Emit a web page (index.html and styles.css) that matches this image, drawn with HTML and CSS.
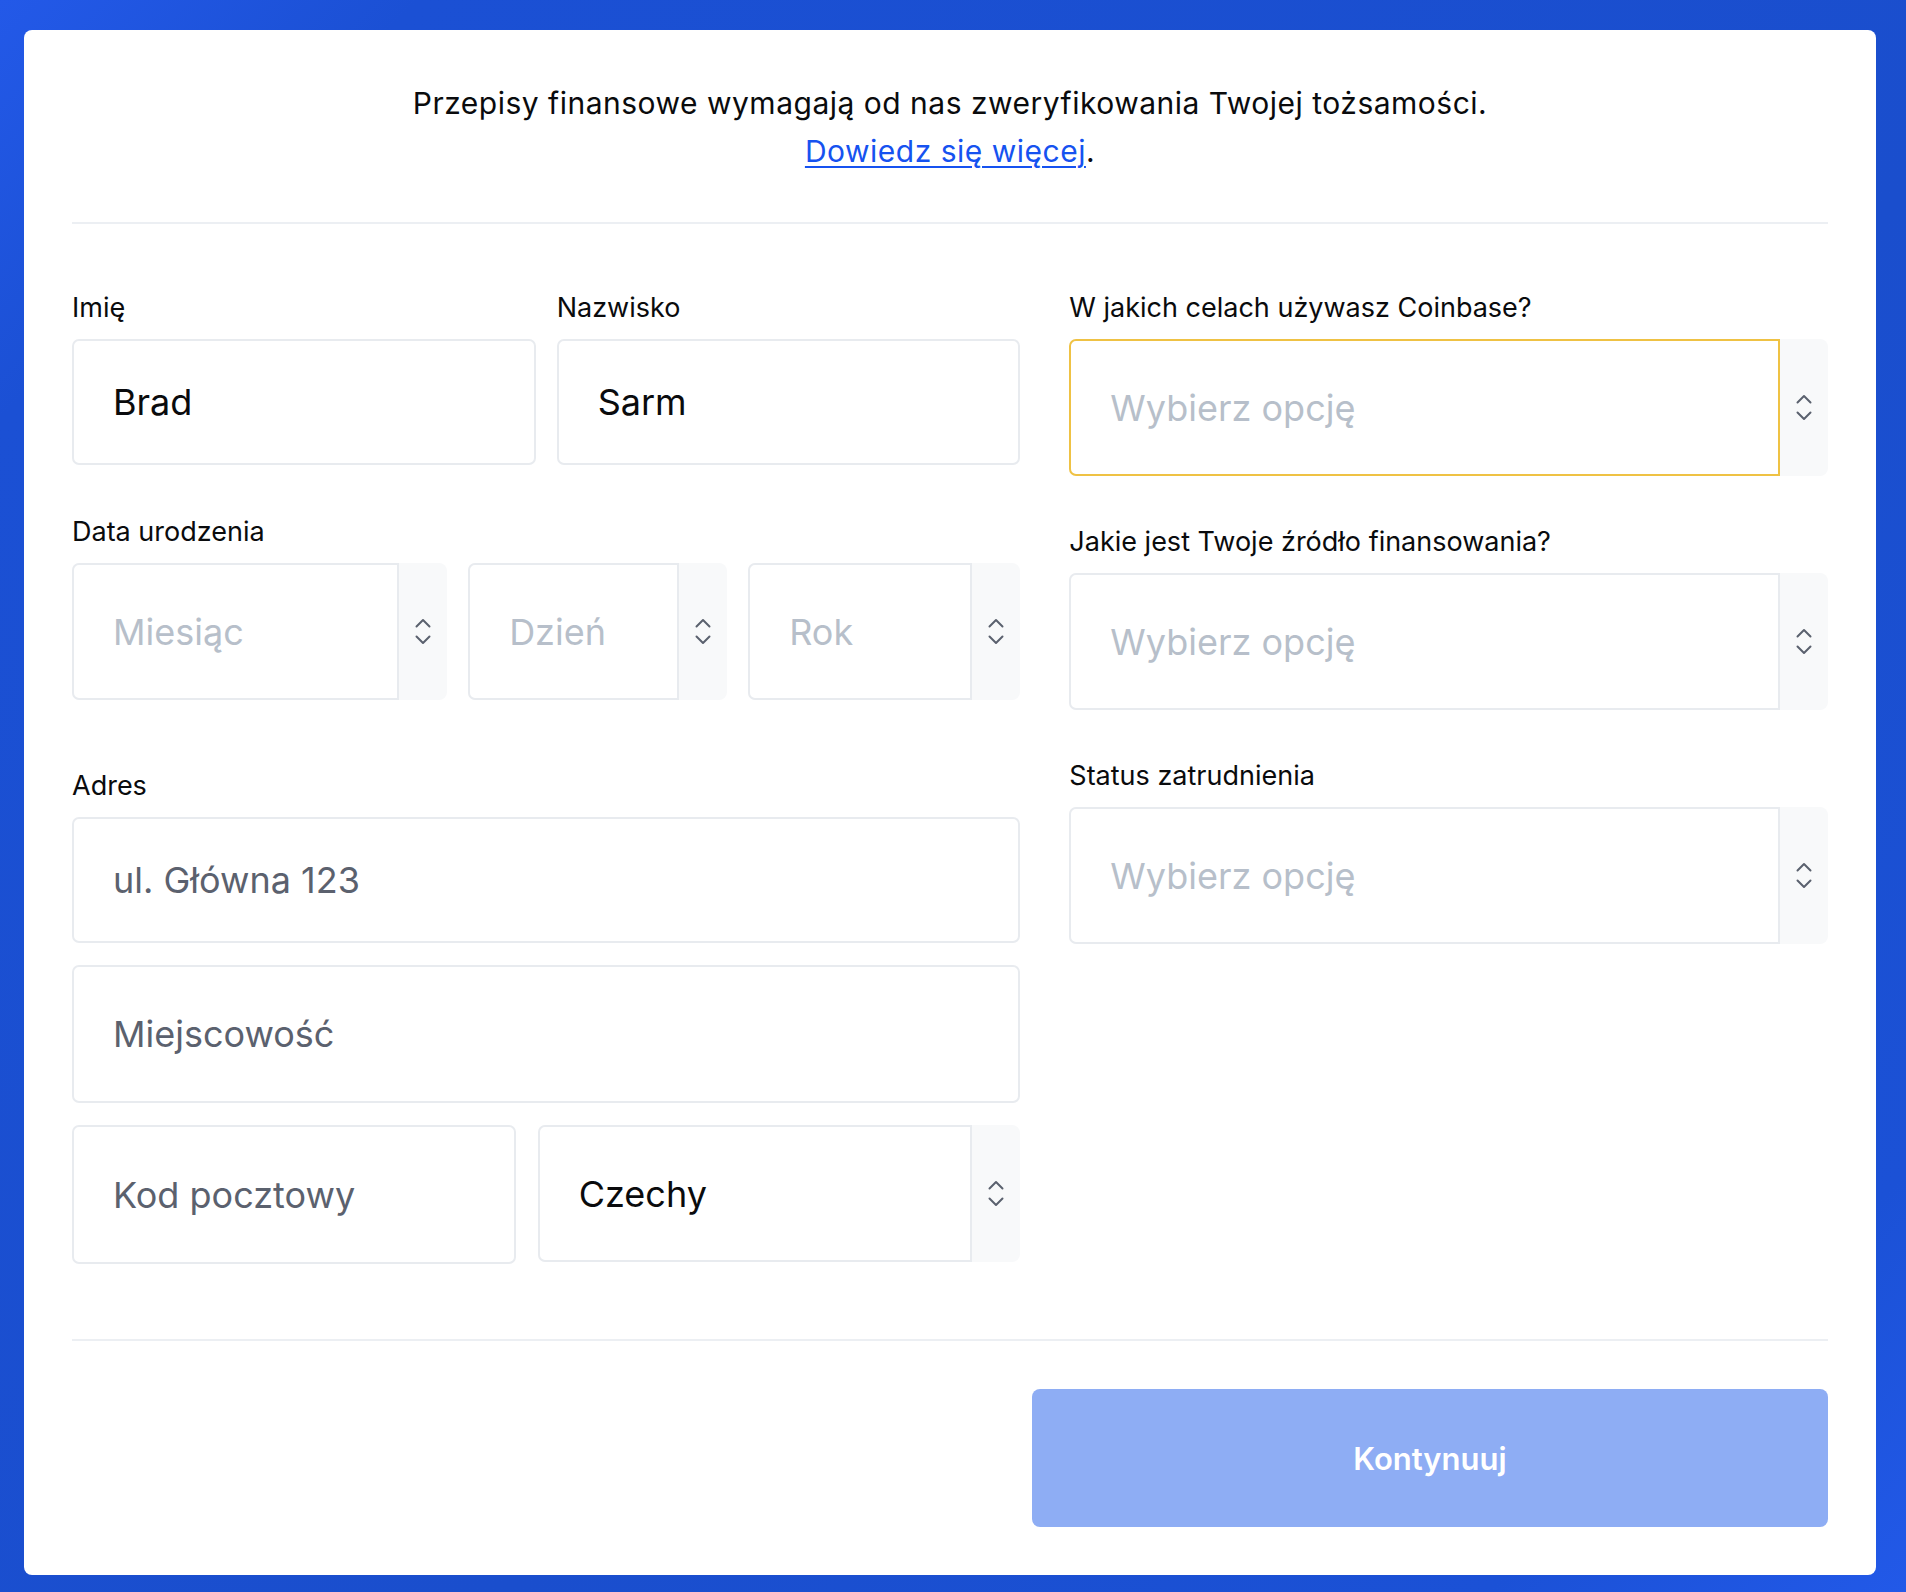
FILE: index.html
```html
<!DOCTYPE html>
<html lang="pl">
<head>
<meta charset="utf-8">
<title>Weryfikacja tożsamości</title>
<link rel="stylesheet" href="styles.css">
</head>
<body>
<main class="card">
  <header class="intro">
    <p>Przepisy finansowe wymagają od nas zweryfikowania Twojej tożsamości.<br><a href="#" class="link">Dowiedz się więcej</a>.</p>
  </header>
  <hr class="divider">
  <form class="form">
    <div class="col col-left">
      <div class="pair">
        <label class="field">
          <span class="label">Imię</span>
          <input class="input h-sm value" type="text" value="Brad">
        </label>
        <label class="field">
          <span class="label">Nazwisko</span>
          <input class="input h-sm value" type="text" value="Sarm">
        </label>
      </div>

      <div class="group group-date">
        <span class="label">Data urodzenia</span>
        <div class="date-row">
          <div class="select-wrap">
            <select class="select muted"><option>Miesiąc</option></select>
            <span class="chev"><svg width="16" height="27" viewBox="0 0 16 27"><path d="M1.5 8.5 L8 2 L14.5 8.5 M1.5 18.5 L8 25 L14.5 18.5"/></svg></span>
          </div>
          <div class="select-wrap">
            <select class="select muted"><option>Dzień</option></select>
            <span class="chev"><svg width="16" height="27" viewBox="0 0 16 27"><path d="M1.5 8.5 L8 2 L14.5 8.5 M1.5 18.5 L8 25 L14.5 18.5"/></svg></span>
          </div>
          <div class="select-wrap">
            <select class="select muted"><option>Rok</option></select>
            <span class="chev"><svg width="16" height="27" viewBox="0 0 16 27"><path d="M1.5 8.5 L8 2 L14.5 8.5 M1.5 18.5 L8 25 L14.5 18.5"/></svg></span>
          </div>
        </div>
      </div>

      <div class="group group-address">
        <span class="label">Adres</span>
        <div class="stack">
          <input class="input h-sm" type="text" placeholder="ul. Główna 123">
          <input class="input h-lg" type="text" placeholder="Miejscowość">
          <div class="postal-row">
            <input class="input h-xl" type="text" placeholder="Kod pocztowy">
            <div class="select-wrap">
              <select class="select value"><option>Czechy</option></select>
              <span class="chev"><svg width="16" height="27" viewBox="0 0 16 27"><path d="M1.5 8.5 L8 2 L14.5 8.5 M1.5 18.5 L8 25 L14.5 18.5"/></svg></span>
            </div>
          </div>
        </div>
      </div>
    </div>

    <div class="col col-right">
      <div class="group">
        <span class="label">W jakich celach używasz Coinbase?</span>
        <div class="select-wrap">
          <select class="select muted focused"><option>Wybierz opcję</option></select>
          <span class="chev"><svg width="16" height="27" viewBox="0 0 16 27"><path d="M1.5 8.5 L8 2 L14.5 8.5 M1.5 18.5 L8 25 L14.5 18.5"/></svg></span>
        </div>
      </div>
      <div class="group">
        <span class="label">Jakie jest Twoje źródło finansowania?</span>
        <div class="select-wrap">
          <select class="select muted"><option>Wybierz opcję</option></select>
          <span class="chev"><svg width="16" height="27" viewBox="0 0 16 27"><path d="M1.5 8.5 L8 2 L14.5 8.5 M1.5 18.5 L8 25 L14.5 18.5"/></svg></span>
        </div>
      </div>
      <div class="group">
        <span class="label">Status zatrudnienia</span>
        <div class="select-wrap">
          <select class="select muted"><option>Wybierz opcję</option></select>
          <span class="chev"><svg width="16" height="27" viewBox="0 0 16 27"><path d="M1.5 8.5 L8 2 L14.5 8.5 M1.5 18.5 L8 25 L14.5 18.5"/></svg></span>
        </div>
      </div>
    </div>
  </form>
  <hr class="divider divider-bottom">
  <footer class="actions">
    <button class="btn" type="button">Kontynuuj</button>
  </footer>
</main>
</body>
</html>
```

FILE: styles.css
```css
* { box-sizing: border-box; }

html, body {
  margin: 0;
  padding: 0;
}

body {
  font-family: "Inter", "Noto Sans", sans-serif;
  color: #0a0b0d;
  background: linear-gradient(135deg, #2359e8 0%, #1b50d4 12%, #1a4ecd 60%, #1b51d6 88%, #2259e8 100%);
  padding: 30px 30px 18px 24px;
  min-height: 1592px;
}

.card {
  background: #ffffff;
  border-radius: 8px;
  padding: 49px 48px 48px 48px;
}

.intro p {
  margin: 0;
  text-align: center;
  font-size: 30px;
  letter-spacing: 0.5px;
  line-height: 48px;
  color: #0a0b0d;
}

.link {
  color: #1652f0;
  text-decoration: underline;
  text-underline-offset: 4px;
  text-decoration-thickness: 2px;
}

.divider {
  border: 0;
  height: 2px;
  background: #eceff3;
  margin: 47px 0 0 0;
}

.form {
  display: grid;
  grid-template-columns: 5fr 4fr;
  column-gap: 49px;
  margin-top: 68px;
  align-items: start;
}

.col {
  display: flex;
  flex-direction: column;
}

.label {
  display: block;
  font-size: 27px;
  line-height: 32px;
  margin-bottom: 15px;
  color: #0a0b0d;
}

.field {
  display: flex;
  flex-direction: column;
}

.pair {
  display: grid;
  grid-template-columns: 1fr 1fr;
  column-gap: 21px;
}

.group {
  display: flex;
  flex-direction: column;
}

.col-right .group + .group {
  margin-top: 50px;
}

.group-date {
  margin-top: 51px;
}

.group-address {
  margin-top: 70px;
}

.date-row {
  display: grid;
  grid-template-columns: 375fr 259fr 272fr;
  column-gap: 21px;
}

.stack {
  display: flex;
  flex-direction: column;
  gap: 22px;
}

.postal-row {
  display: grid;
  grid-template-columns: 444fr 483fr;
  column-gap: 22px;
}

.input {
  display: block;
  width: 100%;
  font-family: inherit;
  font-size: 36px;
  color: #5b616e;
  background: #ffffff;
  border: 2px solid #e8ebef;
  border-radius: 7px;
  padding: 0 20px 0 39px;
  outline: none;
  -webkit-appearance: none;
  appearance: none;
}

.input.value { color: #0a0b0d; }

.input::placeholder { color: #5b616e; opacity: 1; }

.h-sm { height: 126px; }
.h-lg { height: 138px; }
.h-xl { height: 139px; }

.select-wrap {
  display: flex;
  height: 137px;
  background: #f8f9fa;
  border-radius: 8px;
}

.select {
  flex: 1;
  min-width: 0;
  height: 100%;
  font-family: inherit;
  font-size: 36px;
  background: #ffffff;
  border: 2px solid #e8ebef;
  border-radius: 7px 0 0 7px;
  padding: 0 10px 0 39px;
  outline: none;
  -webkit-appearance: none;
  appearance: none;
}

.select.muted { color: #b7bfca; }
.select.value { color: #0a0b0d; }
.select.focused { border-color: #efc244; }

.chev {
  width: 48px;
  flex: none;
  display: flex;
  align-items: center;
  justify-content: center;
}

.chev svg {
  display: block;
  fill: none;
  stroke: #5b616e;
  stroke-width: 2;
  stroke-linecap: round;
  stroke-linejoin: round;
}

.divider-bottom {
  margin-top: 75px;
}

.actions {
  display: flex;
  justify-content: flex-end;
  margin-top: 48px;
}

.btn {
  width: 796px;
  height: 138px;
  border: 0;
  border-radius: 8px;
  background: #8eadf4;
  color: #ffffff;
  font-family: inherit;
  font-size: 31px;
  font-weight: 600;
  cursor: pointer;
}
```
